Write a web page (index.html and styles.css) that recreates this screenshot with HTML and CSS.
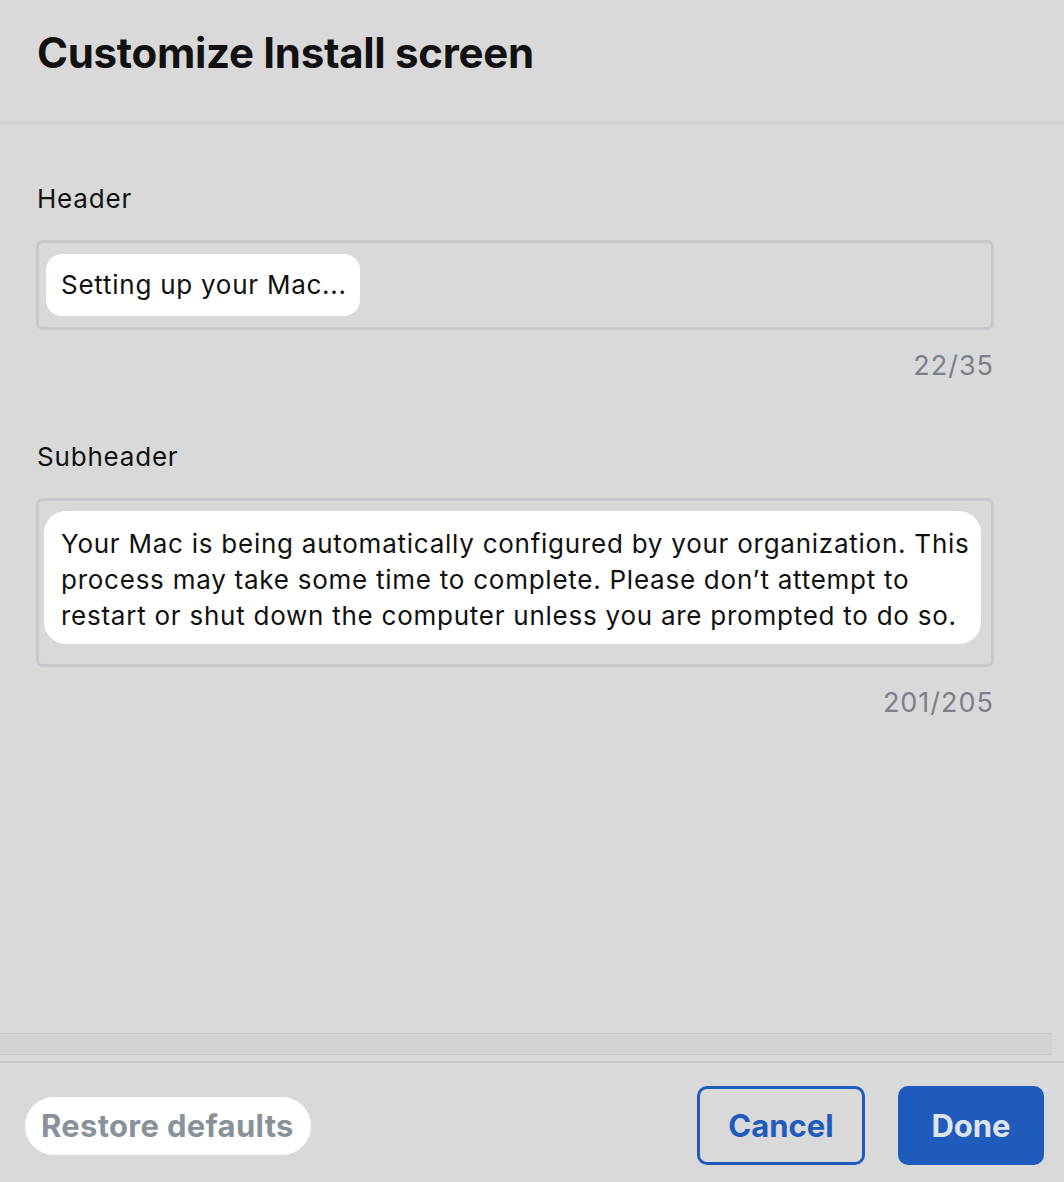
FILE: index.html
```html
<!DOCTYPE html>
<html lang="en">
<head>
<meta charset="utf-8">
<title>Customize Install screen</title>
<link rel="stylesheet" href="styles.css">
</head>
<body>
<div class="dialog">
  <header class="dialog-header">
    <h1 class="dialog-title">Customize Install screen</h1>
  </header>
  <main class="dialog-body">
    <section class="field">
      <label class="field-label">Header</label>
      <div class="field-box field-box-single">
        <span class="field-value field-value-single">Setting up your Mac...</span>
      </div>
      <div class="field-count">22/35</div>
    </section>
    <section class="field">
      <label class="field-label">Subheader</label>
      <div class="field-box field-box-multi">
        <div class="field-value field-value-multi">Your Mac is being automatically configured by your organization. This process may take some time to complete. Please don’t attempt to restart or shut down the computer unless you are prompted to do so.</div>
      </div>
      <div class="field-count">201/205</div>
    </section>
  </main>
  <div class="scroll-band"></div>
  <footer class="dialog-footer">
    <button class="btn btn-restore">Restore defaults</button>
    <div class="footer-actions">
      <button class="btn btn-cancel">Cancel</button>
      <button class="btn btn-done">Done</button>
    </div>
  </footer>
</div>
</body>
</html>
```
FILE: styles.css
```css
html, body {
  margin: 0;
  padding: 0;
  background: #d9d9d9;
}
body {
  font-family: Inter, "Liberation Sans", sans-serif;
  color: #111111;
}
.dialog {
  width: 1064px;
  height: 1182px;
  display: flex;
  flex-direction: column;
  overflow: hidden;
}
.dialog-header {
  height: 124px;
  box-sizing: border-box;
  padding: 27px 0 0 37px;
  border-bottom: 2px solid #cfcfcf;
}
.dialog-title {
  margin: 0;
  font-size: 42px;
  line-height: 52px;
  font-weight: 700;
  letter-spacing: -0.3px;
  color: #111111;
}
.dialog-body {
  flex: 1;
  padding: 0 70px 0 36px;
}
.field {
  margin-top: 57px;
  display: flex;
  flex-direction: column;
}
.field + .field {
  margin-top: 55px;
}
.field-label {
  font-size: 26px;
  line-height: 36px;
  letter-spacing: 0.8px;
  color: #111111;
  padding-left: 1px;
  margin-bottom: 23px;
}
.field-box {
  border: 3px solid #c6c8ce;
  border-radius: 7px;
  box-sizing: border-box;
}
.field-box-single {
  height: 90px;
  padding: 11px 7px;
}
.field-value {
  background: #ffffff;
  font-size: 26px;
  line-height: 36px;
  letter-spacing: 0.75px;
  color: #111111;
}
.field-value-single {
  display: inline-block;
  padding: 13px 13px 13px 15px;
  border-radius: 16px;
}
.field-box-multi {
  height: 169px;
  padding: 10px 10px 0 5px;
}
.field-value-multi {
  padding: 15px 8px 10px 17px;
  border-radius: 22px;
}
.field-count {
  align-self: flex-end;
  margin-top: 18px;
  font-size: 27px;
  line-height: 36px;
  letter-spacing: 1px;
  color: #7b8189;
}
.scroll-band {
  height: 20px;
  margin-right: 12px;
  background: #d4d4d4;
  border-top: 1px solid #c7c7c7;
  border-bottom: 1px solid #c7c7c7;
  margin-bottom: 6px;
}
.dialog-footer {
  height: 121px;
  box-sizing: border-box;
  border-top: 2px solid #c9cad0;
  padding: 6px 20px 0 25px;
  display: flex;
  align-items: center;
  justify-content: space-between;
}
.btn {
  font-family: Inter, "Liberation Sans", sans-serif;
  font-weight: 700;
  font-size: 31px;
  margin: 0;
  cursor: pointer;
  box-sizing: border-box;
}
.btn-restore {
  height: 58px;
  padding: 0 17px 0 16px;
  border: none;
  border-radius: 29px;
  background: #ffffff;
  color: #8a9299;
  letter-spacing: 0.3px;
}
.footer-actions {
  display: flex;
  gap: 33px;
}
.btn-cancel {
  width: 168px;
  height: 79px;
  border: 3px solid #1f5bbd;
  border-radius: 10px;
  background: transparent;
  color: #1f5bbd;
}
.btn-done {
  width: 146px;
  height: 79px;
  border: none;
  border-radius: 10px;
  background: #1f5bbd;
  color: #dfe4ec;
}
```
